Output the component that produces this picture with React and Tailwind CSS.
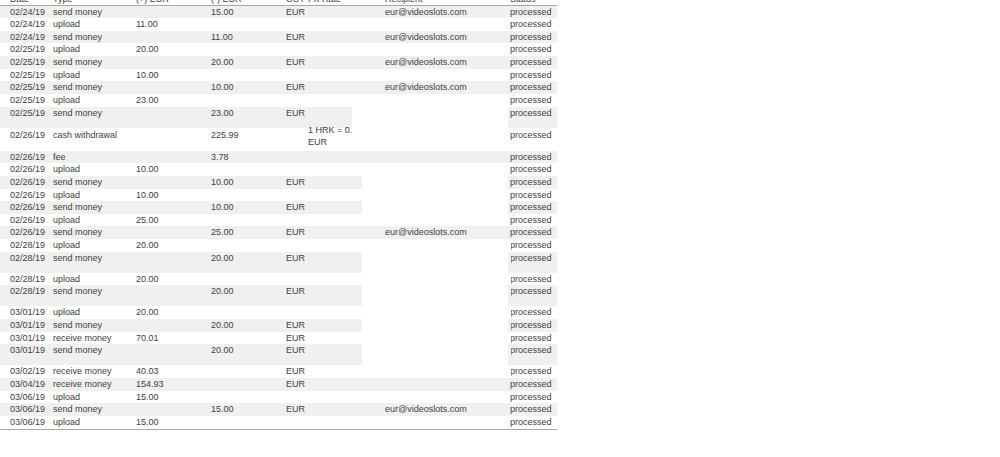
import React from 'react';

const ROWS = [
    ['02/24/19', 'send money', '', '15.00', 'EUR', 'eur@videoslots.com', 'full'],
    ['02/24/19', 'upload', '11.00', '', '', '', 'none'],
    ['02/24/19', 'send money', '', '11.00', 'EUR', 'eur@videoslots.com', 'full'],
    ['02/25/19', 'upload', '20.00', '', '', '', 'none'],
    ['02/25/19', 'send money', '', '20.00', 'EUR', 'eur@videoslots.com', 'full'],
    ['02/25/19', 'upload', '10.00', '', '', '', 'none'],
    ['02/25/19', 'send money', '', '10.00', 'EUR', 'eur@videoslots.com', 'full'],
    ['02/25/19', 'upload', '23.00', '', '', '', 'none'],
    ['02/25/19', 'send money', '', '23.00', 'EUR', '', 'a', 'tall'],
    ['02/26/19', 'cash withdrawal', '', '225.99', '', '', 'none', 'fx'],
    ['02/26/19', 'fee', '', '3.78', '', '', 'full'],
    ['02/26/19', 'upload', '10.00', '', '', '', 'none'],
    ['02/26/19', 'send money', '', '10.00', 'EUR', '', 'b'],
    ['02/26/19', 'upload', '10.00', '', '', '', 'none'],
    ['02/26/19', 'send money', '', '10.00', 'EUR', '', 'b'],
    ['02/26/19', 'upload', '25.00', '', '', '', 'none'],
    ['02/26/19', 'send money', '', '25.00', 'EUR', 'eur@videoslots.com', 'full'],
    ['02/28/19', 'upload', '20.00', '', '', '', 'none', '', true],
    ['02/28/19', 'send money', '', '20.00', 'EUR', '', 'b', 'tall', true],
    ['02/28/19', 'upload', '20.00', '', '', '', 'none', '', true],
    ['02/28/19', 'send money', '', '20.00', 'EUR', '', 'b', 'tall', true],
    ['03/01/19', 'upload', '20.00', '', '', '', 'none', '', true],
    ['03/01/19', 'send money', '', '20.00', 'EUR', '', 'b', '', true],
    ['03/01/19', 'receive money', '70.01', '', 'EUR', '', 'none', '', true],
    ['03/01/19', 'send money', '', '20.00', 'EUR', '', 'b', 'tall', true],
    ['03/02/19', 'receive money', '40.03', '', 'EUR', '', 'none', '', true],
    ['03/04/19', 'receive money', '154.93', '', 'EUR', '', 'full'],
    ['03/06/19', 'upload', '15.00', '', '', '', 'none'],
    ['03/06/19', 'send money', '', '15.00', 'EUR', 'eur@videoslots.com', 'full'],
    ['03/06/19', 'upload', '15.00', '', '', '', 'none'],
];

// left block / middle block widths per shading split
const SPLIT = {
    full: { left: 'w-[385px] bg-[#f0f0f0]', mid: 'w-[123px] pl-0 bg-[#f0f0f0]', stat: 'bg-[#f0f0f0]' },
    none: { left: 'w-[385px]', mid: 'w-[123px] pl-0', stat: '' },
    a: { left: 'w-[352px] bg-[#f0f0f0]', mid: 'w-[156px] pl-[33px]', stat: 'bg-[#f0f0f0]' },
    b: { left: 'w-[362px] bg-[#f0f0f0]', mid: 'w-[146px] pl-[23px]', stat: 'bg-[#f0f0f0]' },
};

const HEIGHT = {
    '': 'h-[12.65px]',
    tall: 'h-[21px]',
    fx: 'h-[23px] pt-[1.5px]',
};

const Row = ({ r }) => {
    const [date, type, plus, minus, ccy, recipient, shade, size = '', clip = false] = r;
    const s = SPLIT[shade];
    const fx = size === 'fx';
    return (
        <div className={`flex items-start ${HEIGHT[size]}`}>
            <div className={`flex h-full shrink-0 items-start ${s.left}`}>
                <div className="w-[53px] shrink-0 pl-[10px]">{date}</div>
                <div className="w-[83px] shrink-0">{type}</div>
                <div className="w-[75px] shrink-0">{plus}</div>
                <div className="w-[75px] shrink-0">{minus}</div>
                <div className="w-[22px] shrink-0">{ccy}</div>
                <div className="flex-1 overflow-visible">
                    {fx && (
                        <div className="-mt-[5px] leading-[12px]">
                            <div className="whitespace-nowrap">1 HRK = 0.</div>
                            <div>EUR</div>
                        </div>
                    )}
                </div>
            </div>
            <div className={`h-full shrink-0 ${s.mid}`}>{recipient}</div>
            <div className={`h-full w-[49px] shrink-0 ${s.stat}`}>
                {clip ? (
                    <div className="ml-[3px] overflow-hidden whitespace-nowrap">
                        <span className="-ml-[1px] inline-block">processed</span>
                    </div>
                ) : (
                    <div className="pl-[2px] whitespace-nowrap">processed</div>
                )}
            </div>
        </div>
    );
};

export default function App() {
    return (
        <div className="w-[1000px] h-[457px] overflow-hidden bg-white font-['Liberation_Sans',Arial,sans-serif] text-[9px] leading-[12.65px] text-[#404040]">
            <div className="-mt-[7.15px] w-[557px]">
                {/* Header */}
                <div className="flex h-[12.65px] items-start border-b border-[#a8a8a8]">
                    <div className="w-[53px] pl-[10px]">Date</div>
                    <div className="w-[83px]">Type</div>
                    <div className="w-[75px]">(+) EUR</div>
                    <div className="w-[75px]">(-) EUR</div>
                    <div className="w-[22px]">CCY</div>
                    <div className="w-[77px]">FX Rate</div>
                    <div className="w-[123px]">Recipient</div>
                    <div className="pl-[2px]">Status</div>
                </div>

                {ROWS.map((r, i) => <Row key={i} r={r} />)}

                <div className="h-px bg-[#a8a8a8]" />
            </div>
        </div>
    );
}
